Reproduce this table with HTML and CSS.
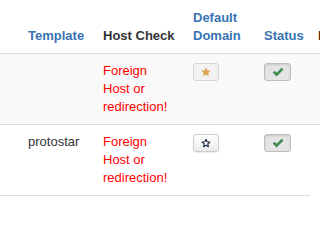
FILE: index.html
```html
<!DOCTYPE html>
<html lang="en">

<head>
    <meta charset="UTF-8">
    <title>Template Styles</title>
    <link rel="stylesheet" href="styles.css">
</head>

<body>
    <div class="wrap">
        <table class="list">
            <thead>
                <tr>
                    <th class="c-select"></th>
                    <th class="c-template"><a href="#">Template</a></th>
                    <th class="c-host">Host Check</th>
                    <th class="c-default"><a href="#">Default Domain</a></th>
                    <th class="c-status"><a href="#">Status</a></th>
                    <th class="c-id"><span class="dark">ID</span></th>
                </tr>
            </thead>
            <tbody>
                <tr class="odd">
                    <td></td>
                    <td></td>
                    <td class="warn">Foreign Host or redirection!</td>
                    <td>
                        <span class="btn btn-star is-default">
                            <svg width="10" height="10" viewBox="0 0 10 10"><path d="M5 0.3 6.4 3.4 9.7 3.7 7.2 5.9 7.9 9.3 5 7.5 2.1 9.3 2.8 5.9 0.3 3.7 3.6 3.4Z" fill="#dd9f50"/></svg>
                        </span>
                    </td>
                    <td>
                        <span class="btn btn-check">
                            <svg width="12" height="10" viewBox="0 0 12 10"><path d="M1 5.6 2.6 4 4.6 6 9.6 1 11.2 2.6 4.6 9.2Z" fill="#3d8f3c" stroke="#2a6a8a" stroke-width="0.4"/></svg>
                        </span>
                    </td>
                    <td></td>
                </tr>
                <tr>
                    <td></td>
                    <td>protostar</td>
                    <td class="warn">Foreign Host or redirection!</td>
                    <td>
                        <span class="btn btn-star">
                            <svg width="10" height="10" viewBox="0 0 10 10"><path d="M5 1.2 6.1 3.8 8.9 4 6.8 5.9 7.4 8.7 5 7.2 2.6 8.7 3.2 5.9 1.1 4 3.9 3.8Z" fill="none" stroke="#1d2a44" stroke-width="1.1" stroke-linejoin="round"/></svg>
                        </span>
                    </td>
                    <td>
                        <span class="btn btn-check">
                            <svg width="12" height="10" viewBox="0 0 12 10"><path d="M1 5.6 2.6 4 4.6 6 9.6 1 11.2 2.6 4.6 9.2Z" fill="#3d8f3c" stroke="#2a6a8a" stroke-width="0.4"/></svg>
                        </span>
                    </td>
                    <td class="no-line"></td>
                </tr>
            </tbody>
        </table>
    </div>
</body>

</html>
```

FILE: styles.css
```css
/* list of template styles */
body {
    margin: 0;
    overflow: hidden;
    font-family: "Liberation Sans", Arial, sans-serif;
    font-size: 13px;
    line-height: 18px;
    color: #333;
    background: #fff;
}

.wrap {
    padding-top: 1px;
}

.list {
    border-collapse: separate;
    border-spacing: 0;
    table-layout: fixed;
    width: 380px;
}

.list th,
.list td {
    padding: 8px;
    text-align: left;
    vertical-align: top;
}

.list th {
    vertical-align: bottom;
    font-weight: bold;
    border-bottom: 1px solid #ddd;
}

.list td {
    border-bottom: 1px solid #ddd;
}

.list td.no-line {
    border-bottom: none;
}

.list a {
    color: #3873b3;
    text-decoration: none;
}

.list .dark {
    color: #4a2e1a;
}

.c-select { width: 4px; }
.c-template { width: 59px; }
.c-host { width: 74px; }
.c-default { width: 55px; }
.c-status { width: 38px; }
.c-id { width: 54px; }

.odd td {
    background: #f9f9f9;
}

.warn {
    color: #f00;
}

.btn {
    box-sizing: border-box;
    display: flex;
    align-items: center;
    justify-content: center;
    margin-top: 1px;
    width: 26px;
    height: 18px;
    border: 1px solid #ccc;
    border-radius: 3px;
    background: linear-gradient(#fff, #ececec);
    box-shadow: 0 1px 1px rgba(0, 0, 0, 0.08);
}

.btn-star.is-default {
    background: #f2f2f2;
    border-color: #d6d6d6;
    box-shadow: none;
}

.btn-check {
    width: 27px;
    margin-left: 0;
    background: #e4e4e4;
    border-color: #bdbdbd;
    box-shadow: inset 0 1px 2px rgba(0, 0, 0, 0.12);
}
```
